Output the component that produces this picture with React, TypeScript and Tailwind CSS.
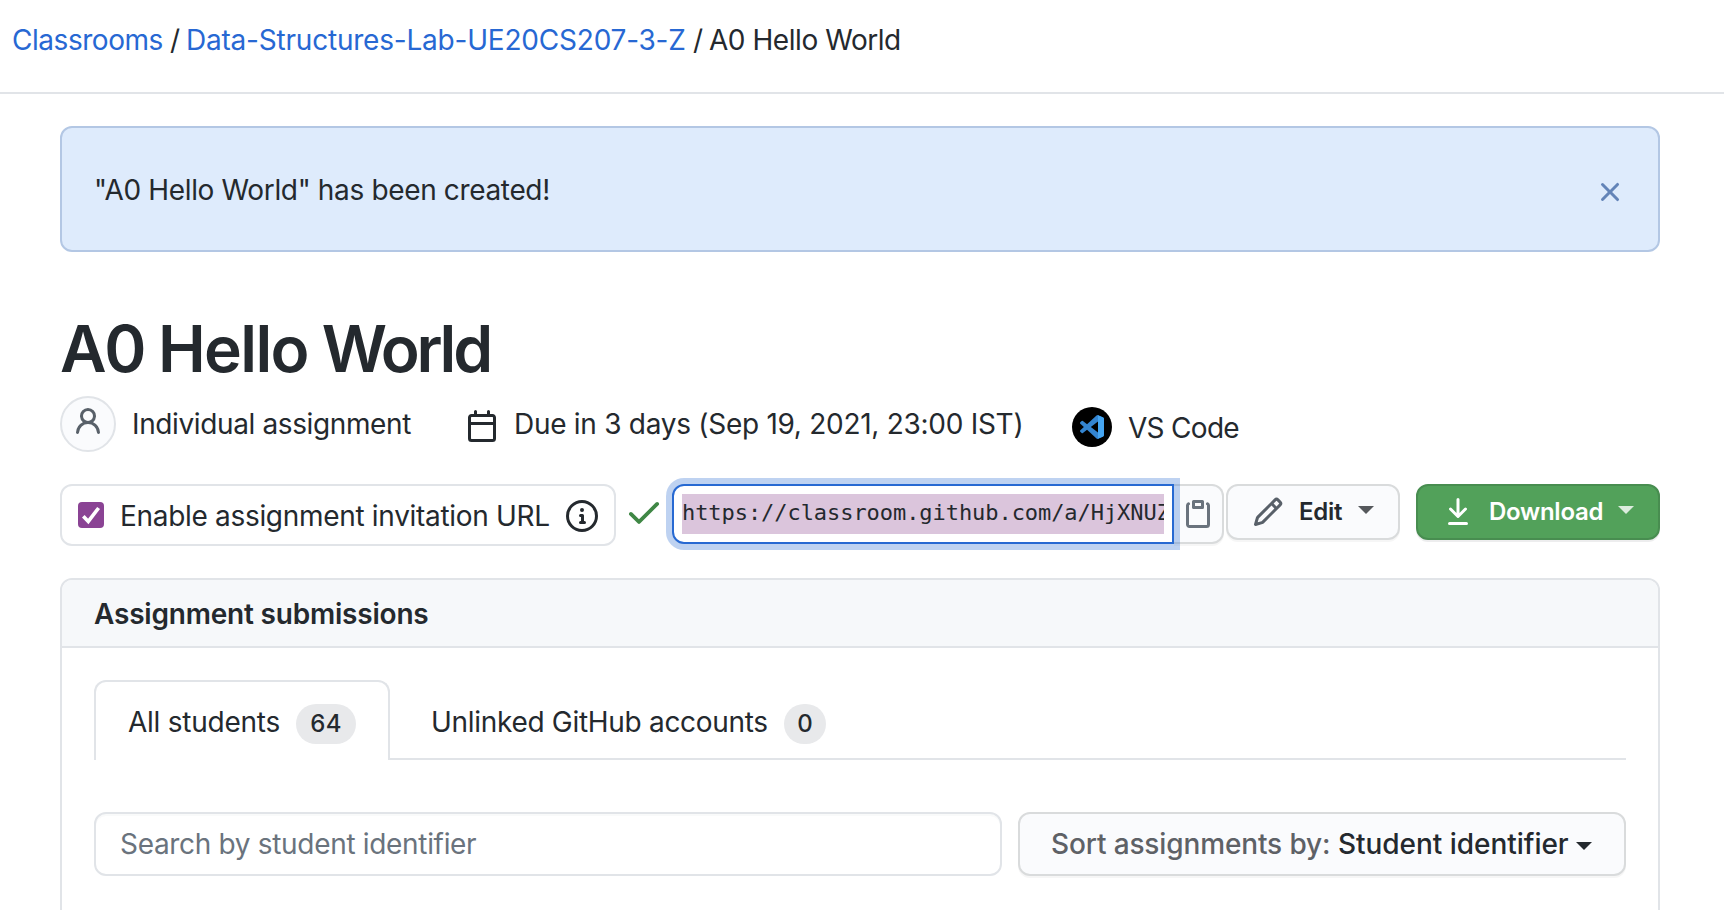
type IconProps = { d: string; size?: number; className?: string }

const PERSON =
  'M10.5 5a2.5 2.5 0 11-5 0 2.5 2.5 0 015 0zm.061 3.073a4 4 0 10-5.123 0 6.004 6.004 0 00-3.431 5.142.75.75 0 001.498.07 4.5 4.5 0 018.99 0 .75.75 0 101.498-.07 6.005 6.005 0 00-3.432-5.142z'
const CALENDAR =
  'M4.75 0a.75.75 0 01.75.75V2h5V.75a.75.75 0 011.5 0V2h1.25c.966 0 1.75.784 1.75 1.75v10.5A1.75 1.75 0 0113.25 16H2.75A1.75 1.75 0 011 14.25V3.75C1 2.784 1.784 2 2.75 2H4V.75A.75.75 0 014.75 0zm0 3.5h8.5a.25.25 0 01.25.25V6h-11V3.75a.25.25 0 01.25-.25h2zm-2.25 4v6.75c0 .138.112.25.25.25h10.5a.25.25 0 00.25-.25V7.5h-11z'
const INFO =
  'M8 1.5a6.5 6.5 0 100 13 6.5 6.5 0 000-13zM0 8a8 8 0 1116 0A8 8 0 010 8zm6.5-.25A.75.75 0 017.25 7h1a.75.75 0 01.75.75v2.75h.25a.75.75 0 010 1.5h-2a.75.75 0 010-1.5h.25v-2h-.25a.75.75 0 01-.75-.75zM8 6a1 1 0 100-2 1 1 0 000 2z'
const CHECK =
  'M13.78 4.22a.75.75 0 010 1.06l-7.25 7.25a.75.75 0 01-1.06 0L2.22 9.28a.75.75 0 011.06-1.06L6 10.94l6.72-6.72a.75.75 0 011.06 0z'
const CLIPBOARD =
  'M5.75 1a.75.75 0 00-.75.75v3c0 .414.336.75.75.75h4.5a.75.75 0 00.75-.75v-3a.75.75 0 00-.75-.75h-4.5zm.75 3V2.5h3V4h-3zm-2.874-.467a.75.75 0 00-.752-1.298A1.75 1.75 0 002 3.75v9.5c0 .966.784 1.75 1.75 1.75h8.5A1.75 1.75 0 0014 13.25v-9.5a1.75 1.75 0 00-.874-1.515.75.75 0 10-.752 1.298.25.25 0 01.126.217v9.5a.25.25 0 01-.25.25h-8.5a.25.25 0 01-.25-.25v-9.5a.25.25 0 01.126-.217z'
const PENCIL =
  'M11.013 1.427a1.75 1.75 0 012.474 0l1.086 1.086a1.75 1.75 0 010 2.474l-8.61 8.61c-.21.21-.47.364-.756.445l-3.251.93a.75.75 0 01-.927-.928l.929-3.25a1.75 1.75 0 01.445-.758l8.61-8.61zm1.414 1.06a.25.25 0 00-.354 0L10.811 3.75l1.439 1.44 1.263-1.263a.25.25 0 000-.354l-1.086-1.086zM11.189 6.25L9.75 4.81l-6.286 6.287a.25.25 0 00-.064.108l-.558 1.953 1.953-.558a.249.249 0 00.108-.064l6.286-6.286z'
const DOWNLOAD =
  'M7.47 10.78a.75.75 0 001.06 0l3.75-3.75a.75.75 0 00-1.06-1.06L8.75 8.44V1.75a.75.75 0 00-1.5 0v6.69L4.78 5.97a.75.75 0 00-1.06 1.06l3.75 3.75zM3.75 13a.75.75 0 000 1.5h8.5a.75.75 0 000-1.5h-8.5z'
const CLOSE =
  'M3.72 3.72a.75.75 0 011.06 0L8 6.94l3.22-3.22a.75.75 0 111.06 1.06L9.06 8l3.22 3.22a.75.75 0 11-1.06 1.06L8 9.06l-3.22 3.22a.75.75 0 01-1.06-1.06L6.94 8 3.72 4.78a.75.75 0 010-1.06z'

function Icon({ d, size = 32, className = '' }: IconProps) {
  return (
    <svg width={size} height={size} viewBox="0 0 16 16" fill="currentColor" aria-hidden="true" className={`shrink-0 ${className}`}>
      <path fillRule="evenodd" d={d} />
    </svg>
  )
}

function Caret({ className = '' }: { className?: string }) {
  return (
    <svg width="16" height="8" viewBox="0 0 16 8" fill="currentColor" aria-hidden="true" className={`shrink-0 ${className}`}>
      <path d="M0 0h16L8 8z" />
    </svg>
  )
}

function VsCodeLogo() {
  return (
    <span className="mt-[11px] ml-12 flex size-10 shrink-0 items-center justify-center rounded-full bg-black">
      <svg width="24" height="24" viewBox="0 0 24 24" aria-hidden="true">
        <path
          fill="#3485d1"
          fillRule="evenodd"
          d="M23.15 2.587L18.21.21a1.494 1.494 0 0 0-1.705.29l-9.46 8.63-4.12-3.128a.999.999 0 0 0-1.276.057L.327 7.261A1 1 0 0 0 .326 8.74L3.899 12 .326 15.26a1 1 0 0 0 .001 1.479L1.65 17.94a.999.999 0 0 0 1.276.057l4.12-3.128 9.46 8.63a1.492 1.492 0 0 0 1.704.29l4.942-2.377A1.5 1.5 0 0 0 24 20.06V3.939a1.5 1.5 0 0 0-.85-1.352zm-5.146 14.861L10.826 12l7.178-5.448v10.896z"
        />
        <path fill="#45a5f1" d="M18.004.15l5.146 2.437A1.5 1.5 0 0 1 24 3.94v16.12a1.5 1.5 0 0 1-.85 1.353L18.004 23.85z" />
      </svg>
    </span>
  )
}

function Header() {
  return (
    <nav className="flex h-[94px] border-b-2 border-[#e1e4e8] pt-[19px] pl-3 leading-[42px] whitespace-nowrap">
      <a className="w-[158px] tracking-[-0.46px] text-[#2768d3]">Classrooms</a>
      <span className="w-4">/</span>
      <a className="w-[507px] tracking-[-0.21px] text-[#2768d3]">Data-Structures-Lab-UE20CS207-3-Z</a>
      <span className="w-4">/</span>
      <span className="tracking-[-0.45px]">A0 Hello World</span>
    </nav>
  )
}

function Flash() {
  return (
    <div className="mt-8 flex h-[126px] justify-between rounded-xl border-2 border-[#b3c7e4] bg-[#deebfc] px-8 whitespace-nowrap">
      <p className="mt-[41px] leading-[42px] tracking-[-0.35px]">&quot;A0 Hello World&quot; has been created!</p>
      <Icon d={CLOSE} className="mt-12 text-[#6384b8]" />
    </div>
  )
}

function Title() {
  return (
    <h1 className="mt-[59px] text-[64px] leading-[76px] font-semibold tracking-[-2.33px] whitespace-nowrap">
      A0 <span className="tracking-[-1.6px]">Hello</span> <span className="tracking-[-3.2px]">World</span>
    </h1>
  )
}

function Meta() {
  return (
    <div className="mt-[9px] flex h-14 items-start leading-[42px] whitespace-nowrap">
      <span className="flex size-14 shrink-0 justify-center rounded-full border-2 border-[#e1e4e8] bg-[#fafbfd] pt-2">
        <Icon d={PERSON} className="text-[#586069]" />
      </span>
      <span className="mt-[7px] ml-4 w-[278px] tracking-[-0.38px]">Individual assignment</span>
      <Icon d={CALENDAR} className="mt-3.5 ml-14" />
      <span className="mt-[7px] ml-4 w-[510px] tracking-[-0.28px]">Due in 3 days (Sep 19, 2021, 23:00 IST)</span>
      <VsCodeLogo />
      <span className="mt-[11px] ml-4 tracking-[-0.7px]">VS Code</span>
    </div>
  )
}

function Actions() {
  return (
    <div className="mt-8 flex h-[62px] items-start whitespace-nowrap">
      <label className="flex h-[62px] w-[556px] shrink-0 items-center rounded-xl border-2 border-[#e1e4e8] pl-4">
        <span className="flex size-[26px] shrink-0 items-center justify-center rounded-[4px] bg-[#8a4394] text-white">
          <svg width="20" height="20" viewBox="0 0 20 20" fill="none" stroke="currentColor" strokeWidth="3.6" aria-hidden="true">
            <path d="M2.3 11.2l5 5.2L17.6 3" />
          </svg>
        </span>
        <span className="mt-0.5 ml-4 w-[430px] tracking-[-0.31px]">Enable assignment invitation URL</span>
        <Icon d={INFO} className="mt-0.5 ml-4" />
      </label>
      <Icon d={CHECK} size={40} className="mt-2 ml-2 text-[#3f8745]" />
      <div className="z-10 ml-2 h-[60px] w-[502px] shrink-0 rounded-l-xl border-2 border-[#2769d2] bg-white px-2 py-2 shadow-[0_0_0_6px_rgba(39,105,210,0.3)]">
        <div className="h-10 overflow-hidden bg-[#dbc5dc] font-['DejaVu_Sans_Mono',monospace] text-[22px] leading-[37px] tracking-[-0.06px]">
          https://classroom.github.com/a/HjXNUZ
        </div>
      </div>
      <button className="flex h-[60px] w-[50px] shrink-0 items-start rounded-r-xl border-2 border-l-0 border-[#d9dbdc] bg-[#fafbfd] pt-3 pl-2 shadow-[0_2px_0_rgba(27,31,35,0.04)]">
        <Icon d={CLIPBOARD} className="text-[#6a737d]" />
      </button>
      <button className="ml-0.5 flex h-14 w-[174px] shrink-0 items-start rounded-xl border-2 border-[#d9dbdc] bg-[#fafbfd] pt-2.5 pl-6 text-2xl font-semibold shadow-[0_2px_0_rgba(27,31,35,0.04)]">
        <Icon d={PENCIL} className="text-[#586069]" />
        <span className="ml-[15px] w-[59px] text-left leading-8 tracking-[-0.26px]">Edit</span>
        <Caret className="mt-2.5 text-[#55585c]" />
      </button>
      <button className="ml-4 flex h-14 w-[244px] shrink-0 items-start rounded-xl border-2 border-[#488d50] bg-[#52a15a] pt-2.5 pl-6 text-2xl font-semibold text-white shadow-[0_2px_0_rgba(27,31,35,0.08)]">
        <Icon d={DOWNLOAD} />
        <span className="ml-[15px] w-[128.5px] text-left leading-8 tracking-[-0.26px]">Download</span>
        <Caret className="mt-2.5 text-[#dcecde]" />
      </button>
    </div>
  )
}

function Submissions() {
  return (
    <section className="mt-8 h-[400px] rounded-xl border-2 border-[#e1e4e8] whitespace-nowrap">
      <header className="h-[68px] rounded-t-[10px] border-b-2 border-[#e1e4e8] bg-[#f6f8fa] pt-[13px] pl-8">
        <h2 className="leading-[42px] font-semibold tracking-[-0.2px]">Assignment submissions</h2>
      </header>
      <div className="px-8 pt-8">
        <div className="flex h-20 items-start border-b-2 border-[#e1e4e8] leading-[42px]">
          <div className="flex h-20 w-[296px] shrink-0 items-start rounded-t-xl border-2 border-b-0 border-[#e1e4e8] bg-white pl-8">
            <span className="mt-[19px] w-[152px] tracking-[-0.24px]">All students</span>
            <span className="mt-[22px] ml-4 h-10 w-[60px] rounded-full bg-[#e8e9eb] text-center text-2xl leading-10 font-medium tracking-[0.3px]">64</span>
          </div>
          <div className="flex h-[78px] items-start pl-[41px]">
            <span className="mt-[21px] w-[337px] tracking-[-0.3px]">Unlinked GitHub accounts</span>
            <span className="mt-6 ml-4 h-10 w-[42px] rounded-full bg-[#e8e9eb] text-center text-2xl leading-10 font-medium">0</span>
          </div>
        </div>
        <div className="mt-[52px] flex">
          <input
            type="text"
            placeholder="Search by student identifier"
            className="h-16 w-[908px] rounded-xl border-2 border-[#e1e4e8] bg-white pl-6 tracking-[-0.32px] shadow-[inset_0_2px_0_rgba(225,228,232,0.2)] placeholder:text-[#6a737d]"
          />
          <button className="ml-4 flex h-16 w-[608px] items-start rounded-xl border-2 border-[#d9dbdc] bg-[#fafbfd] pt-[9px] pl-[31px] text-left leading-[42px] font-medium shadow-[0_2px_0_rgba(27,31,35,0.04)]">
            <span className="w-[287px] tracking-[-0.13px] text-[#5e6166]">Sort assignments by:</span>
            <span className="w-[237.5px] tracking-[-0.04px]">Student identifier</span>
            <Caret className="mt-[19px]" />
          </button>
        </div>
      </div>
    </section>
  )
}

export default function App() {
  return (
    <div className="h-[910px] w-[1724px] overflow-hidden bg-white font-[Inter,sans-serif] text-[28px] text-[#24292e]">
      <Header />
      <main className="ml-[60px] w-[1600px]">
        <Flash />
        <Title />
        <Meta />
        <Actions />
        <Submissions />
      </main>
    </div>
  )
}
